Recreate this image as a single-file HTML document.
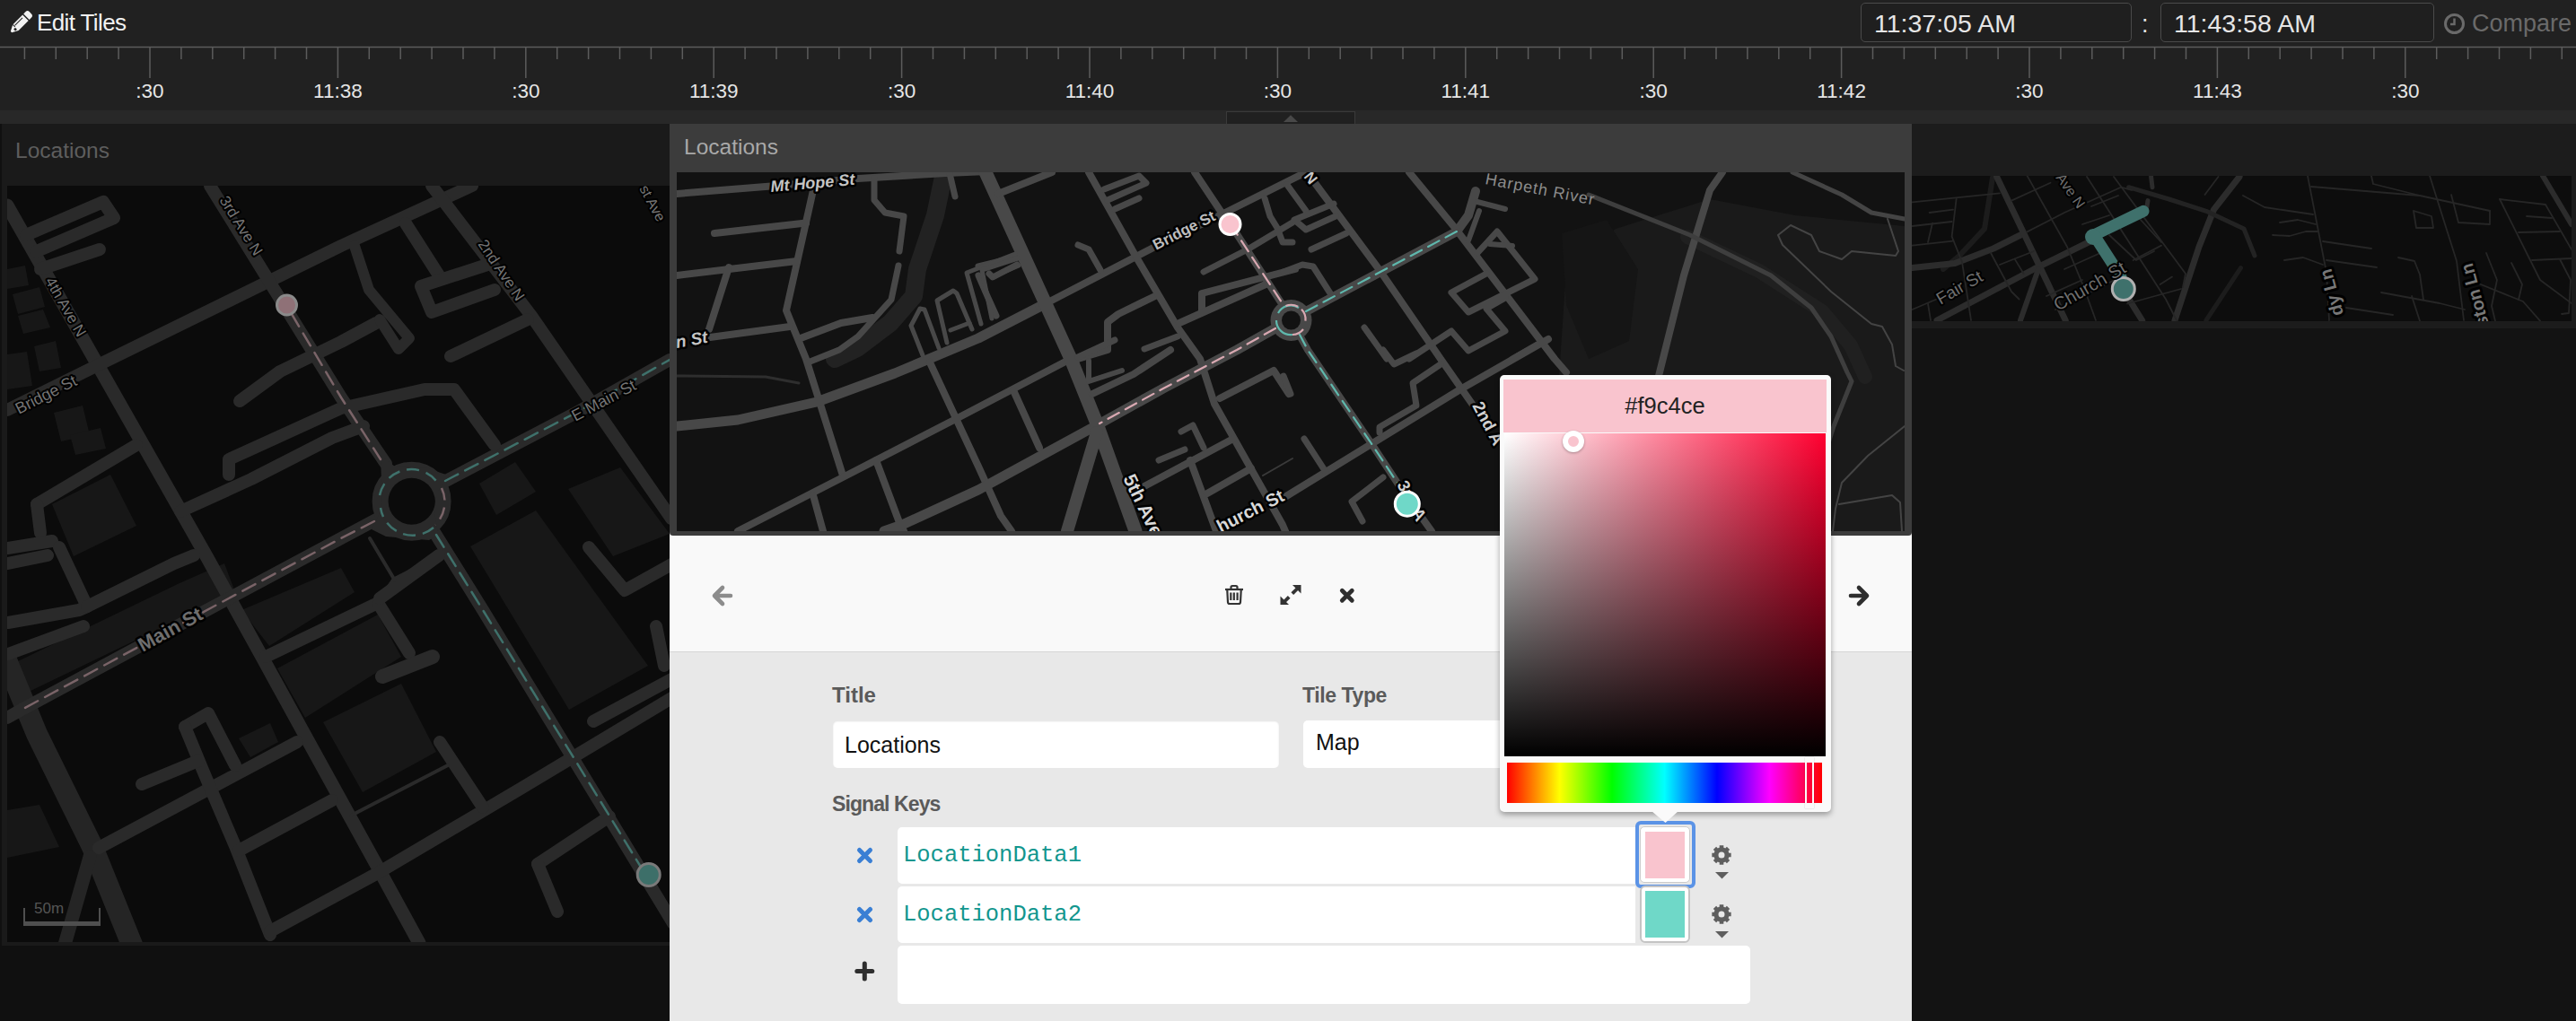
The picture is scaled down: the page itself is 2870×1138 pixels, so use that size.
<!DOCTYPE html>
<html><head><meta charset="utf-8">
<style>
*{margin:0;padding:0;box-sizing:border-box}
html,body{width:2870px;height:1138px;overflow:hidden;background:#101010;font-family:'Liberation Sans', sans-serif}
.abs{position:absolute}
</style></head><body>
<div class="abs" style="left:0;top:0;width:2870px;height:123px;background:#212121"></div>
<div class="abs" style="left:0;top:123px;width:2870px;height:15px;background:#282828"></div>
<div class="abs" style="left:1366px;top:124px;width:144px;height:16px;background:#202020;border:1.5px solid #3a3a3a;border-bottom:none"></div>
<svg class="abs" style="left:1429px;top:127px" width="18" height="10"><path d="M1 9 L9 1.3 L17 9 Z" fill="#484848"/></svg>
<svg style="position:absolute;left:0;top:0" width="2870" height="123"><line x1="0" y1="52.5" x2="2870" y2="52.5" stroke="#5c5c5c" stroke-width="1.5"/><line x1="27.4" y1="52" x2="27.4" y2="66" stroke="#5c5c5c" stroke-width="1.5"/><line x1="62.3" y1="52" x2="62.3" y2="66" stroke="#5c5c5c" stroke-width="1.5"/><line x1="97.2" y1="52" x2="97.2" y2="66" stroke="#5c5c5c" stroke-width="1.5"/><line x1="132.1" y1="52" x2="132.1" y2="66" stroke="#5c5c5c" stroke-width="1.5"/><line x1="167.0" y1="52" x2="167.0" y2="87" stroke="#5c5c5c" stroke-width="1.5"/><line x1="201.9" y1="52" x2="201.9" y2="66" stroke="#5c5c5c" stroke-width="1.5"/><line x1="236.8" y1="52" x2="236.8" y2="66" stroke="#5c5c5c" stroke-width="1.5"/><line x1="271.7" y1="52" x2="271.7" y2="66" stroke="#5c5c5c" stroke-width="1.5"/><line x1="306.6" y1="52" x2="306.6" y2="66" stroke="#5c5c5c" stroke-width="1.5"/><line x1="341.5" y1="52" x2="341.5" y2="66" stroke="#5c5c5c" stroke-width="1.5"/><line x1="376.4" y1="52" x2="376.4" y2="87" stroke="#5c5c5c" stroke-width="1.5"/><line x1="411.3" y1="52" x2="411.3" y2="66" stroke="#5c5c5c" stroke-width="1.5"/><line x1="446.2" y1="52" x2="446.2" y2="66" stroke="#5c5c5c" stroke-width="1.5"/><line x1="481.1" y1="52" x2="481.1" y2="66" stroke="#5c5c5c" stroke-width="1.5"/><line x1="516.0" y1="52" x2="516.0" y2="66" stroke="#5c5c5c" stroke-width="1.5"/><line x1="550.9" y1="52" x2="550.9" y2="66" stroke="#5c5c5c" stroke-width="1.5"/><line x1="585.8" y1="52" x2="585.8" y2="87" stroke="#5c5c5c" stroke-width="1.5"/><line x1="620.7" y1="52" x2="620.7" y2="66" stroke="#5c5c5c" stroke-width="1.5"/><line x1="655.6" y1="52" x2="655.6" y2="66" stroke="#5c5c5c" stroke-width="1.5"/><line x1="690.5" y1="52" x2="690.5" y2="66" stroke="#5c5c5c" stroke-width="1.5"/><line x1="725.4" y1="52" x2="725.4" y2="66" stroke="#5c5c5c" stroke-width="1.5"/><line x1="760.3" y1="52" x2="760.3" y2="66" stroke="#5c5c5c" stroke-width="1.5"/><line x1="795.2" y1="52" x2="795.2" y2="87" stroke="#5c5c5c" stroke-width="1.5"/><line x1="830.1" y1="52" x2="830.1" y2="66" stroke="#5c5c5c" stroke-width="1.5"/><line x1="865.0" y1="52" x2="865.0" y2="66" stroke="#5c5c5c" stroke-width="1.5"/><line x1="899.9" y1="52" x2="899.9" y2="66" stroke="#5c5c5c" stroke-width="1.5"/><line x1="934.8" y1="52" x2="934.8" y2="66" stroke="#5c5c5c" stroke-width="1.5"/><line x1="969.7" y1="52" x2="969.7" y2="66" stroke="#5c5c5c" stroke-width="1.5"/><line x1="1004.6" y1="52" x2="1004.6" y2="87" stroke="#5c5c5c" stroke-width="1.5"/><line x1="1039.5" y1="52" x2="1039.5" y2="66" stroke="#5c5c5c" stroke-width="1.5"/><line x1="1074.4" y1="52" x2="1074.4" y2="66" stroke="#5c5c5c" stroke-width="1.5"/><line x1="1109.3" y1="52" x2="1109.3" y2="66" stroke="#5c5c5c" stroke-width="1.5"/><line x1="1144.2" y1="52" x2="1144.2" y2="66" stroke="#5c5c5c" stroke-width="1.5"/><line x1="1179.1" y1="52" x2="1179.1" y2="66" stroke="#5c5c5c" stroke-width="1.5"/><line x1="1214.0" y1="52" x2="1214.0" y2="87" stroke="#5c5c5c" stroke-width="1.5"/><line x1="1248.9" y1="52" x2="1248.9" y2="66" stroke="#5c5c5c" stroke-width="1.5"/><line x1="1283.8" y1="52" x2="1283.8" y2="66" stroke="#5c5c5c" stroke-width="1.5"/><line x1="1318.7" y1="52" x2="1318.7" y2="66" stroke="#5c5c5c" stroke-width="1.5"/><line x1="1353.6" y1="52" x2="1353.6" y2="66" stroke="#5c5c5c" stroke-width="1.5"/><line x1="1388.5" y1="52" x2="1388.5" y2="66" stroke="#5c5c5c" stroke-width="1.5"/><line x1="1423.4" y1="52" x2="1423.4" y2="87" stroke="#5c5c5c" stroke-width="1.5"/><line x1="1458.3" y1="52" x2="1458.3" y2="66" stroke="#5c5c5c" stroke-width="1.5"/><line x1="1493.2" y1="52" x2="1493.2" y2="66" stroke="#5c5c5c" stroke-width="1.5"/><line x1="1528.1" y1="52" x2="1528.1" y2="66" stroke="#5c5c5c" stroke-width="1.5"/><line x1="1563.0" y1="52" x2="1563.0" y2="66" stroke="#5c5c5c" stroke-width="1.5"/><line x1="1597.9" y1="52" x2="1597.9" y2="66" stroke="#5c5c5c" stroke-width="1.5"/><line x1="1632.8" y1="52" x2="1632.8" y2="87" stroke="#5c5c5c" stroke-width="1.5"/><line x1="1667.7" y1="52" x2="1667.7" y2="66" stroke="#5c5c5c" stroke-width="1.5"/><line x1="1702.6" y1="52" x2="1702.6" y2="66" stroke="#5c5c5c" stroke-width="1.5"/><line x1="1737.5" y1="52" x2="1737.5" y2="66" stroke="#5c5c5c" stroke-width="1.5"/><line x1="1772.4" y1="52" x2="1772.4" y2="66" stroke="#5c5c5c" stroke-width="1.5"/><line x1="1807.3" y1="52" x2="1807.3" y2="66" stroke="#5c5c5c" stroke-width="1.5"/><line x1="1842.2" y1="52" x2="1842.2" y2="87" stroke="#5c5c5c" stroke-width="1.5"/><line x1="1877.1" y1="52" x2="1877.1" y2="66" stroke="#5c5c5c" stroke-width="1.5"/><line x1="1912.0" y1="52" x2="1912.0" y2="66" stroke="#5c5c5c" stroke-width="1.5"/><line x1="1946.9" y1="52" x2="1946.9" y2="66" stroke="#5c5c5c" stroke-width="1.5"/><line x1="1981.8" y1="52" x2="1981.8" y2="66" stroke="#5c5c5c" stroke-width="1.5"/><line x1="2016.7" y1="52" x2="2016.7" y2="66" stroke="#5c5c5c" stroke-width="1.5"/><line x1="2051.6" y1="52" x2="2051.6" y2="87" stroke="#5c5c5c" stroke-width="1.5"/><line x1="2086.5" y1="52" x2="2086.5" y2="66" stroke="#5c5c5c" stroke-width="1.5"/><line x1="2121.4" y1="52" x2="2121.4" y2="66" stroke="#5c5c5c" stroke-width="1.5"/><line x1="2156.3" y1="52" x2="2156.3" y2="66" stroke="#5c5c5c" stroke-width="1.5"/><line x1="2191.2" y1="52" x2="2191.2" y2="66" stroke="#5c5c5c" stroke-width="1.5"/><line x1="2226.1" y1="52" x2="2226.1" y2="66" stroke="#5c5c5c" stroke-width="1.5"/><line x1="2261.0" y1="52" x2="2261.0" y2="87" stroke="#5c5c5c" stroke-width="1.5"/><line x1="2295.9" y1="52" x2="2295.9" y2="66" stroke="#5c5c5c" stroke-width="1.5"/><line x1="2330.8" y1="52" x2="2330.8" y2="66" stroke="#5c5c5c" stroke-width="1.5"/><line x1="2365.7" y1="52" x2="2365.7" y2="66" stroke="#5c5c5c" stroke-width="1.5"/><line x1="2400.6" y1="52" x2="2400.6" y2="66" stroke="#5c5c5c" stroke-width="1.5"/><line x1="2435.5" y1="52" x2="2435.5" y2="66" stroke="#5c5c5c" stroke-width="1.5"/><line x1="2470.4" y1="52" x2="2470.4" y2="87" stroke="#5c5c5c" stroke-width="1.5"/><line x1="2505.3" y1="52" x2="2505.3" y2="66" stroke="#5c5c5c" stroke-width="1.5"/><line x1="2540.2" y1="52" x2="2540.2" y2="66" stroke="#5c5c5c" stroke-width="1.5"/><line x1="2575.1" y1="52" x2="2575.1" y2="66" stroke="#5c5c5c" stroke-width="1.5"/><line x1="2610.0" y1="52" x2="2610.0" y2="66" stroke="#5c5c5c" stroke-width="1.5"/><line x1="2644.9" y1="52" x2="2644.9" y2="66" stroke="#5c5c5c" stroke-width="1.5"/><line x1="2679.8" y1="52" x2="2679.8" y2="87" stroke="#5c5c5c" stroke-width="1.5"/><line x1="2714.7" y1="52" x2="2714.7" y2="66" stroke="#5c5c5c" stroke-width="1.5"/><line x1="2749.6" y1="52" x2="2749.6" y2="66" stroke="#5c5c5c" stroke-width="1.5"/><line x1="2784.5" y1="52" x2="2784.5" y2="66" stroke="#5c5c5c" stroke-width="1.5"/><line x1="2819.4" y1="52" x2="2819.4" y2="66" stroke="#5c5c5c" stroke-width="1.5"/><line x1="2854.3" y1="52" x2="2854.3" y2="66" stroke="#5c5c5c" stroke-width="1.5"/><text x="167.0" y="109" text-anchor="middle" fill="#e6e6e6" font-size="22.5" font-family="'Liberation Sans', sans-serif">:30</text><text x="376.4" y="109" text-anchor="middle" fill="#e6e6e6" font-size="22.5" font-family="'Liberation Sans', sans-serif">11:38</text><text x="585.8" y="109" text-anchor="middle" fill="#e6e6e6" font-size="22.5" font-family="'Liberation Sans', sans-serif">:30</text><text x="795.2" y="109" text-anchor="middle" fill="#e6e6e6" font-size="22.5" font-family="'Liberation Sans', sans-serif">11:39</text><text x="1004.6" y="109" text-anchor="middle" fill="#e6e6e6" font-size="22.5" font-family="'Liberation Sans', sans-serif">:30</text><text x="1214.0" y="109" text-anchor="middle" fill="#e6e6e6" font-size="22.5" font-family="'Liberation Sans', sans-serif">11:40</text><text x="1423.4" y="109" text-anchor="middle" fill="#e6e6e6" font-size="22.5" font-family="'Liberation Sans', sans-serif">:30</text><text x="1632.8" y="109" text-anchor="middle" fill="#e6e6e6" font-size="22.5" font-family="'Liberation Sans', sans-serif">11:41</text><text x="1842.2" y="109" text-anchor="middle" fill="#e6e6e6" font-size="22.5" font-family="'Liberation Sans', sans-serif">:30</text><text x="2051.6" y="109" text-anchor="middle" fill="#e6e6e6" font-size="22.5" font-family="'Liberation Sans', sans-serif">11:42</text><text x="2261.0" y="109" text-anchor="middle" fill="#e6e6e6" font-size="22.5" font-family="'Liberation Sans', sans-serif">:30</text><text x="2470.4" y="109" text-anchor="middle" fill="#e6e6e6" font-size="22.5" font-family="'Liberation Sans', sans-serif">11:43</text><text x="2679.8" y="109" text-anchor="middle" fill="#e6e6e6" font-size="22.5" font-family="'Liberation Sans', sans-serif">:30</text></svg>
<!-- header -->
<svg class="abs" style="left:0px;top:0px" width="50" height="50"><g transform="translate(12.5 35.6) rotate(-45)"><path d="M0 -1 L0 1 L7 4.6 L22.5 4.6 L22.5 -4.6 L7 -4.6 Z" fill="#f2f2f2"/><path d="M24 -4.6 L27 -4.6 Q30.2 -4.6 30.2 -1.6 L30.2 1.6 Q30.2 4.6 27 4.6 L24 4.6 Z" fill="#f2f2f2"/><path d="M8 -2.3 L20 -2.3" stroke="#212121" stroke-width="1"/><path d="M4 -0.2 L6.5 -0.2 L6.5 2.6 L4 2.6 Z" fill="#212121"/><path d="M7 -4.6 L7 -1" stroke="#212121" stroke-width="1"/></g></svg>
<div class="abs" style="left:41px;top:9px;font-size:26px;color:#f2f2f2;line-height:32px;letter-spacing:-0.6px">Edit Tiles</div>
<div class="abs" style="left:2073px;top:3px;width:302px;height:44px;border:1.5px solid #4a4a4a;border-radius:5px;background:#1f1f1f"></div>
<div class="abs" style="left:2088px;top:9px;font-size:28.5px;color:#e6e6e6;line-height:34px">11:37:05 AM</div>
<div class="abs" style="left:2386px;top:11px;font-size:27px;color:#e6e6e6;line-height:32px">:</div>
<div class="abs" style="left:2407px;top:3px;width:305px;height:44px;border:1.5px solid #4a4a4a;border-radius:5px;background:#1f1f1f"></div>
<div class="abs" style="left:2422px;top:9px;font-size:28.5px;color:#e6e6e6;line-height:34px">11:43:58 AM</div>
<svg class="abs" style="left:2722px;top:14px" width="25" height="25" viewBox="0 0 25 25"><circle cx="12.5" cy="12.5" r="10" fill="none" stroke="#6a6a6a" stroke-width="3"/><path d="M12.5 6.5 V13 H8" fill="none" stroke="#6a6a6a" stroke-width="2.5"/></svg>
<div class="abs" style="left:2754px;top:9px;font-size:27px;color:#6a6a6a;line-height:34px">Compare</div>

<!-- left tile -->
<div class="abs" style="left:2px;top:138px;width:744px;height:916px;background:#1a1a1a"></div>
<div class="abs" style="left:17px;top:153px;font-size:24.5px;color:#5e5e5e;line-height:30px">Locations</div>
<div class="abs" style="left:8px;top:207px;width:738px;height:843px;background:#0b0b0b"></div>
<svg class="abs" style="left:8px;top:207px" width="738" height="843" viewBox="8 207 738 843"><path d="M8.0 300.0 L28.0 296.0 L32.0 318.0 L8.0 322.0 Z" fill="#171717"/><path d="M14.0 328.0 L44.0 320.0 L50.0 342.0 L20.0 350.0 Z" fill="#171717"/><path d="M20.0 352.0 L48.0 345.0 L56.0 365.0 L26.0 372.0 Z" fill="#171717"/><path d="M38.0 386.0 L62.0 380.0 L68.0 410.0 L44.0 414.0 Z" fill="#171717"/><path d="M8.0 395.0 L30.0 392.0 L36.0 430.0 L8.0 434.0 Z" fill="#171717"/><path d="M60.0 460.0 L92.0 452.0 L100.0 485.0 L68.0 492.0 Z" fill="#171717"/><path d="M78.0 485.0 L112.0 477.0 L118.0 500.0 L84.0 507.0 Z" fill="#171717"/><path d="M58.0 562.0 L123.0 529.0 L152.0 586.0 L82.0 620.0 Z" fill="#171717"/><path d="M18.0 738.0 L200.0 650.0 L250.0 628.0 L262.0 660.0 L30.0 772.0 Z" fill="#171717"/><path d="M269.0 680.0 L380.0 633.0 L395.0 660.0 L300.0 720.0 Z" fill="#171717"/><path d="M8.0 903.0 L44.0 897.0 L66.0 944.0 L8.0 956.0 Z" fill="#171717"/><path d="M309.0 745.0 L421.0 685.0 L447.0 732.0 L340.0 800.0 Z" fill="#171717"/><path d="M360.0 805.0 L447.0 762.0 L486.0 838.0 L404.0 883.0 Z" fill="#171717"/><path d="M266.0 823.0 L301.0 806.0 L310.0 827.0 L279.0 844.0 Z" fill="#171717"/><path d="M534.0 539.0 L574.0 515.0 L597.0 548.0 L553.0 574.0 Z" fill="#171717"/><path d="M524.0 609.0 L597.0 569.0 L722.0 742.0 L634.0 791.0 Z" fill="#171717"/><path d="M633.0 545.0 L691.0 521.0 L746.0 595.0 L683.0 620.0 Z" fill="#171717"/><path d="M8.0 738.0 L41.0 818.0 L103.0 944.0 L147.0 1053.0" fill="none" stroke="#252525" stroke-width="24" stroke-linejoin="round" stroke-linecap="round"/><path d="M100.0 955.0 L72.0 1053.0" fill="none" stroke="#252525" stroke-width="15" stroke-linejoin="round" stroke-linecap="round"/><path d="M8.0 229.0 L230.0 620.0 L256.0 667.0 L294.0 736.0 L339.0 818.0 L420.0 965.0 L467.0 1051.0" fill="none" stroke="#2a2a2a" stroke-width="15" stroke-linejoin="round" stroke-linecap="round"/><path d="M8.0 457.0 L111.0 406.0 L380.0 274.0 L526.0 207.0" fill="none" stroke="#2a2a2a" stroke-width="14" stroke-linejoin="round" stroke-linecap="round"/><path d="M234.0 207.0 L380.0 443.0 L430.0 517.0" fill="none" stroke="#2a2a2a" stroke-width="14" stroke-linejoin="round" stroke-linecap="round"/><path d="M491.0 539.0 L640.0 461.0 L746.0 401.0" fill="none" stroke="#2a2a2a" stroke-width="14" stroke-linejoin="round" stroke-linecap="round"/><path d="M423.0 577.0 L380.0 600.0 L238.0 676.0 L24.0 791.0 L8.0 800.0" fill="none" stroke="#2a2a2a" stroke-width="14" stroke-linejoin="round" stroke-linecap="round"/><path d="M482.0 590.0 L538.0 680.0 L750.0 1029.0" fill="none" stroke="#2a2a2a" stroke-width="14" stroke-linejoin="round" stroke-linecap="round"/><path d="M481.0 207.0 L592.0 352.0 L748.0 578.0" fill="none" stroke="#2a2a2a" stroke-width="14" stroke-linejoin="round" stroke-linecap="round"/><path d="M29.0 262.0 L115.0 225.0 L127.0 243.0 L41.0 280.0" fill="none" stroke="#2a2a2a" stroke-width="14" stroke-linejoin="round" stroke-linecap="round"/><path d="M45.0 300.0 L111.0 278.0" fill="none" stroke="#2a2a2a" stroke-width="14" stroke-linejoin="round" stroke-linecap="round"/><path d="M267.0 447.0 L312.0 414.0 L380.0 381.0 L419.0 360.0" fill="none" stroke="#2a2a2a" stroke-width="14" stroke-linejoin="round" stroke-linecap="round"/><path d="M255.0 529.0 L255.0 512.0 L380.0 455.0 L473.0 434.0 L506.0 434.0 L551.0 496.0" fill="none" stroke="#2a2a2a" stroke-width="14" stroke-linejoin="round" stroke-linecap="round"/><path d="M201.0 570.0 L280.0 534.0 L370.0 488.0 L405.0 475.0" fill="none" stroke="#2a2a2a" stroke-width="14" stroke-linejoin="round" stroke-linecap="round"/><path d="M41.0 562.0 L152.0 496.0" fill="none" stroke="#2a2a2a" stroke-width="14" stroke-linejoin="round" stroke-linecap="round"/><path d="M41.0 562.0 L45.0 594.0" fill="none" stroke="#2a2a2a" stroke-width="14" stroke-linejoin="round" stroke-linecap="round"/><path d="M8.0 611.0 L58.0 603.0" fill="none" stroke="#2a2a2a" stroke-width="14" stroke-linejoin="round" stroke-linecap="round"/><path d="M452.0 249.0 L489.0 307.0" fill="none" stroke="#2a2a2a" stroke-width="14" stroke-linejoin="round" stroke-linecap="round"/><path d="M543.0 295.0 L469.0 319.0 L481.0 348.0 L551.0 323.0" fill="none" stroke="#2a2a2a" stroke-width="14" stroke-linejoin="round" stroke-linecap="round"/><path d="M395.0 274.0 L411.0 323.0 L456.0 377.0 L444.0 389.0 L423.0 356.0" fill="none" stroke="#2a2a2a" stroke-width="12" stroke-linejoin="round" stroke-linecap="round"/><path d="M502.0 397.0 L588.0 356.0" fill="none" stroke="#2a2a2a" stroke-width="14" stroke-linejoin="round" stroke-linecap="round"/><path d="M9.0 628.0 L53.0 619.0" fill="none" stroke="#2a2a2a" stroke-width="14" stroke-linejoin="round" stroke-linecap="round"/><path d="M9.0 694.0 L88.0 680.0 L97.0 676.0 L66.0 610.0" fill="none" stroke="#2a2a2a" stroke-width="14" stroke-linejoin="round" stroke-linecap="round"/><path d="M9.0 729.0 L93.0 698.0" fill="none" stroke="#2a2a2a" stroke-width="14" stroke-linejoin="round" stroke-linecap="round"/><path d="M97.0 676.0 L194.0 628.0 L216.0 619.0" fill="none" stroke="#2a2a2a" stroke-width="14" stroke-linejoin="round" stroke-linecap="round"/><path d="M110.0 945.0 L331.0 827.0" fill="none" stroke="#2a2a2a" stroke-width="14" stroke-linejoin="round" stroke-linecap="round"/><path d="M296.0 732.0 L421.0 672.0" fill="none" stroke="#2a2a2a" stroke-width="14" stroke-linejoin="round" stroke-linecap="round"/><path d="M421.0 672.0 L439.0 646.0 L490.0 620.0" fill="none" stroke="#2a2a2a" stroke-width="5" stroke-linejoin="round" stroke-linecap="round"/><path d="M421.0 672.0 L456.0 728.0" fill="none" stroke="#2a2a2a" stroke-width="14" stroke-linejoin="round" stroke-linecap="round"/><path d="M426.0 754.0 L482.0 732.0" fill="none" stroke="#2a2a2a" stroke-width="16" stroke-linejoin="round" stroke-linecap="round"/><path d="M206.0 810.0 L232.0 795.0 L262.0 853.0" fill="none" stroke="#2a2a2a" stroke-width="14" stroke-linejoin="round" stroke-linecap="round"/><path d="M206.0 810.0 L227.0 861.0 L262.0 943.0 L301.0 1042.0" fill="none" stroke="#2a2a2a" stroke-width="14" stroke-linejoin="round" stroke-linecap="round"/><path d="M158.0 874.0 L221.0 848.0" fill="none" stroke="#2a2a2a" stroke-width="14" stroke-linejoin="round" stroke-linecap="round"/><path d="M266.0 948.0 L370.0 892.0" fill="none" stroke="#2a2a2a" stroke-width="14" stroke-linejoin="round" stroke-linecap="round"/><path d="M301.0 1038.0 L421.0 973.0 L580.0 879.0 L750.0 777.0" fill="none" stroke="#2a2a2a" stroke-width="14" stroke-linejoin="round" stroke-linecap="round"/><path d="M490.0 827.0 L538.0 900.0" fill="none" stroke="#2a2a2a" stroke-width="14" stroke-linejoin="round" stroke-linecap="round"/><path d="M599.0 963.0 L679.0 910.0" fill="none" stroke="#2a2a2a" stroke-width="14" stroke-linejoin="round" stroke-linecap="round"/><path d="M599.0 963.0 L621.0 1016.0" fill="none" stroke="#2a2a2a" stroke-width="14" stroke-linejoin="round" stroke-linecap="round"/><path d="M656.0 610.0 L696.0 658.0 L750.0 628.0" fill="none" stroke="#2a2a2a" stroke-width="14" stroke-linejoin="round" stroke-linecap="round"/><path d="M731.0 698.0 L740.0 742.0" fill="none" stroke="#2a2a2a" stroke-width="14" stroke-linejoin="round" stroke-linecap="round"/><path d="M661.0 804.0 L750.0 756.0" fill="none" stroke="#2a2a2a" stroke-width="14" stroke-linejoin="round" stroke-linecap="round"/><path d="M489.0 619.0 L423.0 667.0" fill="none" stroke="#2a2a2a" stroke-width="14" stroke-linejoin="round" stroke-linecap="round"/><path d="M391.0 909.0 L499.0 853.0" fill="none" stroke="#2a2a2a" stroke-width="4" stroke-linejoin="round" stroke-linecap="round"/><path d="M412.0 600.0 L440.0 647.0" fill="none" stroke="#2a2a2a" stroke-width="4" stroke-linejoin="round" stroke-linecap="round"/><circle cx="458.6" cy="558.7" r="35" fill="none" stroke="#2a2a2a" stroke-width="18"/><path d="M424.0 508.0 L440.0 520.0 L476.0 522.0 L500.0 530.0 L482.0 556.0 L488.0 596.0 L478.0 602.0 L430.0 598.0 L414.0 590.0 L426.0 566.0 Z" fill="#2a2a2a"/><circle cx="458.6" cy="558.7" r="26" fill="#0b0b0b"/><path d="M325.0 350.0 L380.0 443.0 L424.0 512.0" fill="none" stroke="#7a6468" stroke-width="2.5" stroke-linejoin="round" stroke-linecap="round" stroke-dasharray="16 9"/><path d="M417.0 581.0 L380.0 600.0 L238.0 676.0 L24.0 791.0" fill="none" stroke="#7a6468" stroke-width="2.5" stroke-linejoin="round" stroke-linecap="round" stroke-dasharray="16 9"/><path d="M496.0 536.0 L640.0 461.0 L746.0 401.0" fill="none" stroke="#3f716b" stroke-width="2.5" stroke-linejoin="round" stroke-linecap="round" stroke-dasharray="16 9"/><path d="M486.0 596.0 L538.0 680.0 L715.0 968.0" fill="none" stroke="#3f716b" stroke-width="2.5" stroke-linejoin="round" stroke-linecap="round" stroke-dasharray="16 9"/><path d="M423 552 A36 36 0 0 1 490 542" fill="none" stroke="#3f716b" stroke-width="2.5" stroke-dasharray="14 8"/><path d="M492 544 A36 36 0 0 1 485 585" fill="none" stroke="#7a6468" stroke-width="2.5" stroke-dasharray="14 8"/><path d="M483 588 A36 36 0 0 1 424 566" fill="none" stroke="#3f716b" stroke-width="2.5" stroke-dasharray="14 8"/><circle cx="319.5" cy="340" r="11" fill="#8f7177" stroke="#8a8a8a" stroke-width="3"/><circle cx="722.7" cy="975" r="12.5" fill="#3d6f69" stroke="#7a7a7a" stroke-width="3"/><text x="244" y="223" transform="rotate(58 244 223)" font-family="'Liberation Sans', sans-serif" font-size="17" fill="#747474" stroke="#000" stroke-width="4" stroke-linejoin="round" paint-order="stroke">3rd Ave N</text><text x="50" y="313" transform="rotate(60 50 313)" font-family="'Liberation Sans', sans-serif" font-size="17" fill="#747474" stroke="#000" stroke-width="4" stroke-linejoin="round" paint-order="stroke">4th Ave N</text><text x="21" y="462" transform="rotate(-27 21 462)" font-family="'Liberation Sans', sans-serif" font-size="18" fill="#747474" stroke="#000" stroke-width="4" stroke-linejoin="round" paint-order="stroke">Bridge St</text><text x="532" y="272" transform="rotate(56 532 272)" font-family="'Liberation Sans', sans-serif" font-size="17" fill="#747474" stroke="#000" stroke-width="4" stroke-linejoin="round" paint-order="stroke">2nd Ave N</text><text x="641" y="470" transform="rotate(-28 641 470)" font-family="'Liberation Sans', sans-serif" font-size="18" fill="#747474" stroke="#000" stroke-width="4" stroke-linejoin="round" paint-order="stroke">E Main St</text><text x="159" y="727" transform="rotate(-29 159 727)" font-family="'Liberation Sans', sans-serif" font-size="22" font-weight="bold" fill="#6e6e6e" stroke="#000" stroke-width="5" stroke-linejoin="round" paint-order="stroke">Main St</text><text x="712" y="210" transform="rotate(62 712 210)" font-family="'Liberation Sans', sans-serif" font-size="16" fill="#747474" stroke="#000" stroke-width="4" stroke-linejoin="round" paint-order="stroke">st Ave</text><path d="M27 1012 L27 1030 L111 1030 L111 1012" fill="none" stroke="#4f4f4f" stroke-width="2"/><path d="M26 1029.5 L112 1029.5" stroke="#4f4f4f" stroke-width="5"/><text x="38" y="1018" font-family="'Liberation Sans', sans-serif" font-size="17" fill="#555">50m</text></svg>

<!-- right tile -->
<div class="abs" style="left:2130px;top:138px;width:740px;height:1000px;background:#131313"></div>
<div class="abs" style="left:2130px;top:138px;width:740px;height:228px;background:#1c1c1c"></div>
<div class="abs" style="left:2130px;top:196px;width:735px;height:162px;background:#0d0d0d"></div>
<svg class="abs" style="left:2130px;top:196px" width="735" height="162" viewBox="2130 196 735 162"><path d="M2220.0 198.0 L2211.0 255.0 L2183.0 285.0 L2165.0 300.0" fill="none" stroke="#1c1c1c" stroke-width="6" stroke-linejoin="round" stroke-linecap="round"/><path d="M2130.5 298.6 L2178.0 293.6 L2221.0 277.0 L2251.0 262.0" fill="none" stroke="#2c2c2c" stroke-width="7" stroke-linejoin="round" stroke-linecap="round"/><path d="M2158.0 357.0 L2266.0 300.0 L2333.0 267.0" fill="none" stroke="#2c2c2c" stroke-width="7" stroke-linejoin="round" stroke-linecap="round"/><path d="M2224.6 197.0 L2301.2 357.0" fill="none" stroke="#2c2c2c" stroke-width="7" stroke-linejoin="round" stroke-linecap="round"/><path d="M2271.0 300.0 L2251.0 357.0" fill="none" stroke="#2c2c2c" stroke-width="6" stroke-linejoin="round" stroke-linecap="round"/><path d="M2495.0 197.0 L2466.5 233.6 L2450.0 275.0 L2423.0 357.0" fill="none" stroke="#2c2c2c" stroke-width="7" stroke-linejoin="round" stroke-linecap="round"/><path d="M2371.6 208.7 L2416.6 222.0 L2458.0 235.3 L2500.0 255.0 L2512.0 285.0" fill="none" stroke="#232323" stroke-width="5" stroke-linejoin="round" stroke-linecap="round"/><path d="M2496.5 298.6 L2458.0 357.0" fill="none" stroke="#1c1c1c" stroke-width="5" stroke-linejoin="round" stroke-linecap="round"/><path d="M2396.6 197.0 L2398.0 208.7" fill="none" stroke="#2c2c2c" stroke-width="5" stroke-linejoin="round" stroke-linecap="round"/><path d="M2393.0 223.6 L2391.6 232.0" fill="none" stroke="#2c2c2c" stroke-width="5" stroke-linejoin="round" stroke-linecap="round"/><path d="M2366.6 325.0 L2386.6 357.0" fill="none" stroke="#2c2c2c" stroke-width="7" stroke-linejoin="round" stroke-linecap="round"/><path d="M2833.0 196.0 L2865.0 250.0" fill="none" stroke="#2c2c2c" stroke-width="6" stroke-linejoin="round" stroke-linecap="round"/><path d="M2130.5 225.3 L2228.0 215.3" fill="none" stroke="#262626" stroke-width="1.8" stroke-linejoin="round" stroke-linecap="round"/><path d="M2149.6 237.0 L2176.0 233.6" fill="none" stroke="#262626" stroke-width="1.8" stroke-linejoin="round" stroke-linecap="round"/><path d="M2130.5 252.0 L2174.6 247.0" fill="none" stroke="#262626" stroke-width="1.8" stroke-linejoin="round" stroke-linecap="round"/><path d="M2130.5 273.6 L2176.0 268.6" fill="none" stroke="#262626" stroke-width="1.8" stroke-linejoin="round" stroke-linecap="round"/><path d="M2179.6 222.0 L2174.6 263.6 L2186.0 292.0 L2196.0 357.0" fill="none" stroke="#262626" stroke-width="1.8" stroke-linejoin="round" stroke-linecap="round"/><path d="M2153.0 248.6 L2148.0 270.0" fill="none" stroke="#262626" stroke-width="1.8" stroke-linejoin="round" stroke-linecap="round"/><path d="M2241.0 223.6 L2284.5 203.7" fill="none" stroke="#262626" stroke-width="1.8" stroke-linejoin="round" stroke-linecap="round"/><path d="M2258.0 195.0 L2303.0 275.0 L2321.0 318.6 L2335.0 357.0" fill="none" stroke="#262626" stroke-width="1.8" stroke-linejoin="round" stroke-linecap="round"/><path d="M2258.0 258.6 L2300.0 237.0 L2363.0 208.7 L2375.0 212.0" fill="none" stroke="#262626" stroke-width="1.8" stroke-linejoin="round" stroke-linecap="round"/><path d="M2218.0 282.0 L2241.0 325.0 L2249.6 333.5" fill="none" stroke="#262626" stroke-width="1.8" stroke-linejoin="round" stroke-linecap="round"/><path d="M2228.0 295.0 L2266.0 280.0" fill="none" stroke="#262626" stroke-width="1.8" stroke-linejoin="round" stroke-linecap="round"/><path d="M2244.6 288.6 L2254.6 305.0" fill="none" stroke="#262626" stroke-width="1.8" stroke-linejoin="round" stroke-linecap="round"/><path d="M2130.5 345.0 L2161.0 332.0" fill="none" stroke="#262626" stroke-width="1.8" stroke-linejoin="round" stroke-linecap="round"/><path d="M2148.0 338.5 L2151.0 357.0" fill="none" stroke="#262626" stroke-width="1.8" stroke-linejoin="round" stroke-linecap="round"/><path d="M2325.0 197.0 L2413.0 333.5 L2425.0 357.0" fill="none" stroke="#262626" stroke-width="1.8" stroke-linejoin="round" stroke-linecap="round"/><path d="M2355.0 197.0 L2435.0 305.0 L2432.0 320.0" fill="none" stroke="#262626" stroke-width="1.8" stroke-linejoin="round" stroke-linecap="round"/><path d="M2376.6 290.0 L2408.0 273.6" fill="none" stroke="#262626" stroke-width="1.8" stroke-linejoin="round" stroke-linecap="round"/><path d="M2370.0 338.5 L2430.0 322.0" fill="none" stroke="#262626" stroke-width="1.8" stroke-linejoin="round" stroke-linecap="round"/><path d="M2406.6 317.0 L2420.0 308.6" fill="none" stroke="#262626" stroke-width="1.8" stroke-linejoin="round" stroke-linecap="round"/><path d="M2456.5 217.0 L2471.5 197.0" fill="none" stroke="#262626" stroke-width="1.8" stroke-linejoin="round" stroke-linecap="round"/><path d="M2300.0 300.0 L2340.0 282.0" fill="none" stroke="#262626" stroke-width="1.8" stroke-linejoin="round" stroke-linecap="round"/><path d="M2280.0 330.0 L2320.0 312.0" fill="none" stroke="#262626" stroke-width="1.8" stroke-linejoin="round" stroke-linecap="round"/><path d="M2290.0 345.0 L2360.0 310.0" fill="none" stroke="#262626" stroke-width="1.8" stroke-linejoin="round" stroke-linecap="round"/><path d="M2330.0 230.0 L2360.0 218.0" fill="none" stroke="#262626" stroke-width="1.8" stroke-linejoin="round" stroke-linecap="round"/><path d="M2320.0 250.0 L2350.0 240.0" fill="none" stroke="#262626" stroke-width="1.8" stroke-linejoin="round" stroke-linecap="round"/><path d="M2350.0 262.0 L2380.0 290.0 L2400.0 280.0" fill="none" stroke="#262626" stroke-width="1.8" stroke-linejoin="round" stroke-linecap="round"/><path d="M2385.0 245.0 L2408.0 270.0" fill="none" stroke="#262626" stroke-width="1.8" stroke-linejoin="round" stroke-linecap="round"/><path d="M2571.0 196.0 L2592.0 304.0 L2595.0 357.0" fill="none" stroke="#262626" stroke-width="1.8" stroke-linejoin="round" stroke-linecap="round"/><path d="M2707.0 196.0 L2737.0 291.0 L2745.0 357.0" fill="none" stroke="#262626" stroke-width="1.8" stroke-linejoin="round" stroke-linecap="round"/><path d="M2785.0 222.0 L2830.0 312.0 L2865.0 338.0" fill="none" stroke="#262626" stroke-width="1.8" stroke-linejoin="round" stroke-linecap="round"/><path d="M2575.0 208.0 L2696.0 218.0 L2774.0 235.0" fill="none" stroke="#262626" stroke-width="1.8" stroke-linejoin="round" stroke-linecap="round"/><path d="M2642.0 196.0 L2644.0 205.0 L2696.0 218.0" fill="none" stroke="#262626" stroke-width="1.8" stroke-linejoin="round" stroke-linecap="round"/><path d="M2499.0 218.0 L2523.0 231.0 L2577.0 239.0" fill="none" stroke="#262626" stroke-width="1.8" stroke-linejoin="round" stroke-linecap="round"/><path d="M2532.0 262.0 L2551.0 263.0 L2569.0 258.0 L2582.0 258.0" fill="none" stroke="#262626" stroke-width="1.8" stroke-linejoin="round" stroke-linecap="round"/><path d="M2588.0 269.0 L2642.0 277.0" fill="none" stroke="#262626" stroke-width="1.8" stroke-linejoin="round" stroke-linecap="round"/><path d="M2545.0 290.0 L2566.0 287.0 L2588.0 295.0" fill="none" stroke="#262626" stroke-width="1.8" stroke-linejoin="round" stroke-linecap="round"/><path d="M2592.0 290.0 L2648.0 298.0" fill="none" stroke="#262626" stroke-width="1.8" stroke-linejoin="round" stroke-linecap="round"/><path d="M2672.0 287.0 L2690.0 291.0 L2696.0 306.0 L2700.0 334.0" fill="none" stroke="#262626" stroke-width="1.8" stroke-linejoin="round" stroke-linecap="round"/><path d="M2653.0 326.0 L2718.0 338.0 L2746.0 345.0" fill="none" stroke="#262626" stroke-width="1.8" stroke-linejoin="round" stroke-linecap="round"/><path d="M2614.0 343.0 L2666.0 351.0" fill="none" stroke="#262626" stroke-width="1.8" stroke-linejoin="round" stroke-linecap="round"/><path d="M2687.0 330.0 L2696.0 357.7" fill="none" stroke="#262626" stroke-width="1.8" stroke-linejoin="round" stroke-linecap="round"/><path d="M2759.0 315.0 L2811.0 336.0 L2830.0 357.7" fill="none" stroke="#262626" stroke-width="1.8" stroke-linejoin="round" stroke-linecap="round"/><path d="M2770.0 282.0 L2782.0 312.0 L2776.0 341.0 L2780.0 357.7" fill="none" stroke="#262626" stroke-width="1.8" stroke-linejoin="round" stroke-linecap="round"/><path d="M2798.0 293.0 L2810.0 317.0 L2806.0 334.0" fill="none" stroke="#262626" stroke-width="1.8" stroke-linejoin="round" stroke-linecap="round"/><path d="M2806.0 259.0 L2852.0 258.0" fill="none" stroke="#262626" stroke-width="1.8" stroke-linejoin="round" stroke-linecap="round"/><path d="M2815.0 241.0 L2843.0 243.0" fill="none" stroke="#262626" stroke-width="1.8" stroke-linejoin="round" stroke-linecap="round"/><path d="M2821.0 290.0 L2865.0 288.0" fill="none" stroke="#262626" stroke-width="1.8" stroke-linejoin="round" stroke-linecap="round"/><path d="M2852.0 289.0 L2864.0 312.0 L2862.0 349.0 L2854.0 350.0" fill="none" stroke="#262626" stroke-width="1.8" stroke-linejoin="round" stroke-linecap="round"/><path d="M2785.0 222.0 L2836.0 228.0 L2865.0 278.0" fill="none" stroke="#262626" stroke-width="1.8" stroke-linejoin="round" stroke-linecap="round"/><path d="M2689.0 235.0 L2709.0 241.0 L2711.0 254.0 L2692.0 254.0 L2689.0 235.0" fill="none" stroke="#262626" stroke-width="1.8" stroke-linejoin="round" stroke-linecap="round"/><path d="M2731.0 217.0 L2739.0 248.0 L2774.0 250.0 L2774.0 235.0" fill="none" stroke="#262626" stroke-width="1.8" stroke-linejoin="round" stroke-linecap="round"/><path d="M2540.0 248.0 L2560.0 245.0 L2580.0 250.0" fill="none" stroke="#262626" stroke-width="1.8" stroke-linejoin="round" stroke-linecap="round"/><path d="M2388.0 235.3 L2333.0 262.0 L2363.0 308.6" fill="none" stroke="#3f716c" stroke-width="13" stroke-linejoin="round" stroke-linecap="round"/><circle cx="2332" cy="264" r="9" fill="#3f716c"/><circle cx="2365.8" cy="322" r="12.5" fill="#3f716c" stroke="#b0b0b0" stroke-width="3"/><text x="2162" y="340" transform="rotate(-30 2162 340)" font-family="'Liberation Sans', sans-serif" font-size="19" fill="#6e6e6e" stroke="#000" stroke-width="4" stroke-linejoin="round" paint-order="stroke">Fair St</text><text x="2293" y="347" transform="rotate(-30 2293 347)" font-family="'Liberation Sans', sans-serif" font-size="20" fill="#6e6e6e" stroke="#000" stroke-width="4" stroke-linejoin="round" paint-order="stroke">Church St</text><text x="2290" y="198" transform="rotate(55 2290 198)" font-family="'Liberation Sans', sans-serif" font-size="16" fill="#6e6e6e" stroke="#000" stroke-width="4" stroke-linejoin="round" paint-order="stroke">Ave N</text><text x="2611" y="350" transform="rotate(-105 2611 350)" font-family="'Liberation Sans', sans-serif" font-size="20" font-weight="bold" fill="#777" stroke="#000" stroke-width="6" stroke-linejoin="round" paint-order="stroke">dy Ln</text><text x="2773" y="362" transform="rotate(-105 2773 362)" font-family="'Liberation Sans', sans-serif" font-size="20" font-weight="bold" fill="#777" stroke="#000" stroke-width="6" stroke-linejoin="round" paint-order="stroke">ston Ln</text></svg>

<!-- modal -->
<div class="abs" style="left:746px;top:138px;width:1384px;height:1000px;background:#e8e8e8"></div>
<div class="abs" style="left:746px;top:138px;width:1384px;height:459px;background:#3c3c3c;border-radius:0 0 4px 4px"></div>
<div class="abs" style="left:762px;top:149px;font-size:24.5px;color:#a9a9a9;line-height:30px">Locations</div>
<div class="abs" style="left:754px;top:192px;width:1368px;height:400px;background:#121212"></div>
<svg class="abs" style="left:754px;top:192px" width="1368" height="400" viewBox="754 192 1368 400"><path d="M1745.0 300.0 L1800.0 255.0 L1905.0 222.0 L2000.0 240.0 L2122.0 252.0 L2122.0 592.0 L1745.0 592.0 L1735.0 450.0 Z" fill="#1a1a1a"/><path d="M1740.0 260.0 L1790.0 245.0 L1825.0 300.0 L1815.0 380.0 L1770.0 400.0 L1745.0 340.0 Z" fill="#151515"/><path d="M1905.0 192.0 L2000.0 192.0 L2052.0 217.0 L2085.0 237.0 L2122.0 244.0 L2122.0 192.0 Z" fill="#121212"/><path d="M1880.0 264.0 L1960.0 302.0 L2030.0 347.0 L2062.0 385.0 L2078.0 420.0" fill="none" stroke="#202020" stroke-width="16" stroke-linejoin="round" stroke-linecap="round"/><path d="M1052.0 192.0 L1042.0 240.0 L1022.0 300.0 L1018.0 330.0 L992.0 360.0 L955.0 388.0 L930.0 400.0" fill="none" stroke="#222222" stroke-width="20" stroke-linejoin="round" stroke-linecap="round"/><path d="M754.0 216.0 L859.0 207.5 L956.0 199.0 L1054.0 193.0 L1100.0 191.0" fill="none" stroke="#484848" stroke-width="8" stroke-linejoin="round" stroke-linecap="round"/><path d="M906.0 212.0 L876.0 346.0 L880.0 356.0 L898.0 400.0 L939.0 530.0" fill="none" stroke="#484848" stroke-width="8" stroke-linejoin="round" stroke-linecap="round"/><path d="M796.0 260.0 L898.0 248.6" fill="none" stroke="#484848" stroke-width="8" stroke-linejoin="round" stroke-linecap="round"/><path d="M754.0 307.0 L888.0 291.0" fill="none" stroke="#484848" stroke-width="8" stroke-linejoin="round" stroke-linecap="round"/><path d="M812.0 298.0 L790.0 367.0" fill="none" stroke="#484848" stroke-width="8" stroke-linejoin="round" stroke-linecap="round"/><path d="M791.0 376.0 L880.0 364.0" fill="none" stroke="#484848" stroke-width="8" stroke-linejoin="round" stroke-linecap="round"/><path d="M892.0 377.0 L937.0 360.0 L972.0 354.0" fill="none" stroke="#484848" stroke-width="8" stroke-linejoin="round" stroke-linecap="round"/><path d="M974.0 199.0 L974.0 223.0 L986.0 237.0 L1007.0 241.0 L1002.0 280.0" fill="none" stroke="#484848" stroke-width="7" stroke-linejoin="round" stroke-linecap="round"/><path d="M1001.0 296.0 L993.0 334.0 L956.0 375.0 L935.0 390.0 L900.0 404.0" fill="none" stroke="#484848" stroke-width="7" stroke-linejoin="round" stroke-linecap="round"/><path d="M1058.0 193.0 L1064.0 219.0" fill="none" stroke="#484848" stroke-width="7" stroke-linejoin="round" stroke-linecap="round"/><path d="M754.0 475.0 L822.0 468.0 L910.0 448.0 L997.0 416.0 L1090.0 377.0 L1158.0 342.0" fill="none" stroke="#484848" stroke-width="11" stroke-linejoin="round" stroke-linecap="round"/><path d="M1158.0 342.0 L1285.0 276.0 L1365.0 237.0 L1453.0 193.0" fill="none" stroke="#484848" stroke-width="8" stroke-linejoin="round" stroke-linecap="round"/><path d="M822.0 592.0 L939.0 532.0 L1063.0 468.0 L1189.0 402.0" fill="none" stroke="#484848" stroke-width="8" stroke-linejoin="round" stroke-linecap="round"/><path d="M1201.0 400.0 L1234.0 390.0 L1234.0 375.0 L1234.0 359.0 L1246.0 350.0 L1287.0 330.0" fill="none" stroke="#484848" stroke-width="8" stroke-linejoin="round" stroke-linecap="round"/><path d="M906.0 552.0 L917.0 592.0" fill="none" stroke="#484848" stroke-width="8" stroke-linejoin="round" stroke-linecap="round"/><path d="M976.0 513.0 L1003.0 585.0 L1007.0 592.0" fill="none" stroke="#484848" stroke-width="8" stroke-linejoin="round" stroke-linecap="round"/><path d="M1036.0 404.0 L1091.0 522.0 L1115.0 575.0 L1127.0 592.0" fill="none" stroke="#484848" stroke-width="8" stroke-linejoin="round" stroke-linecap="round"/><path d="M1440.0 356.0 L1419.0 367.0 L1378.0 390.0 L1296.0 433.0 L1222.0 474.0 L1090.0 546.0 L1005.0 585.0 L985.0 592.0" fill="none" stroke="#484848" stroke-width="11" stroke-linejoin="round" stroke-linecap="round"/><path d="M1098.0 192.0 L1193.0 400.0 L1222.0 472.0 L1265.0 592.0" fill="none" stroke="#484848" stroke-width="15" stroke-linejoin="round" stroke-linecap="round"/><path d="M1222.0 482.0 L1189.0 592.0" fill="none" stroke="#484848" stroke-width="14" stroke-linejoin="round" stroke-linecap="round"/><path d="M1112.0 216.0 L1172.0 192.0" fill="none" stroke="#484848" stroke-width="8" stroke-linejoin="round" stroke-linecap="round"/><path d="M1213.0 192.0 L1265.0 285.0 L1312.0 365.0 L1337.0 400.0 L1353.0 450.0 L1429.0 585.0 L1432.0 592.0" fill="none" stroke="#484848" stroke-width="8" stroke-linejoin="round" stroke-linecap="round"/><path d="M1331.0 192.0 L1361.0 237.0 L1371.0 250.0 L1429.0 340.0 L1440.0 356.0" fill="none" stroke="#484848" stroke-width="8" stroke-linejoin="round" stroke-linecap="round"/><path d="M1230.0 211.0 L1269.0 196.0 L1277.0 204.0 L1234.0 223.0" fill="none" stroke="#484848" stroke-width="7" stroke-linejoin="round" stroke-linecap="round"/><path d="M1242.0 233.0 L1269.0 221.0" fill="none" stroke="#484848" stroke-width="7" stroke-linejoin="round" stroke-linecap="round"/><path d="M1201.0 273.0 L1213.0 278.0 L1226.0 301.0" fill="none" stroke="#484848" stroke-width="7" stroke-linejoin="round" stroke-linecap="round"/><path d="M1090.0 297.0 L1131.0 287.0" fill="none" stroke="#484848" stroke-width="7" stroke-linejoin="round" stroke-linecap="round"/><path d="M1102.0 305.0 L1106.0 309.0 L1133.0 295.0" fill="none" stroke="#484848" stroke-width="7" stroke-linejoin="round" stroke-linecap="round"/><path d="M1090.0 307.0 L1100.0 330.0 L1110.0 352.0" fill="none" stroke="#484848" stroke-width="7" stroke-linejoin="round" stroke-linecap="round"/><path d="M1275.0 389.0 L1312.0 375.0" fill="none" stroke="#484848" stroke-width="7" stroke-linejoin="round" stroke-linecap="round"/><path d="M1339.0 346.0 L1339.0 327.0 L1443.0 300.0" fill="none" stroke="#484848" stroke-width="8" stroke-linejoin="round" stroke-linecap="round"/><path d="M1314.0 360.0 L1410.0 317.0" fill="none" stroke="#484848" stroke-width="8" stroke-linejoin="round" stroke-linecap="round"/><path d="M1341.0 303.0 L1390.0 278.0 L1440.0 248.0" fill="none" stroke="#484848" stroke-width="7" stroke-linejoin="round" stroke-linecap="round"/><path d="M1409.0 221.0 L1415.0 241.0 L1423.0 254.0 L1429.0 270.0 L1440.0 270.0" fill="none" stroke="#484848" stroke-width="7" stroke-linejoin="round" stroke-linecap="round"/><path d="M1201.0 398.0 L1242.0 379.0" fill="none" stroke="#484848" stroke-width="7" stroke-linejoin="round" stroke-linecap="round"/><path d="M1129.0 435.0 L1158.0 499.0" fill="none" stroke="#484848" stroke-width="8" stroke-linejoin="round" stroke-linecap="round"/><path d="M1217.0 439.0 L1263.0 417.0 L1304.0 390.0" fill="none" stroke="#484848" stroke-width="8" stroke-linejoin="round" stroke-linecap="round"/><path d="M1213.0 402.0 L1213.0 425.0 L1250.0 413.0" fill="none" stroke="#484848" stroke-width="6" stroke-linejoin="round" stroke-linecap="round"/><path d="M1028.0 396.0 L1015.0 363.0 L1025.0 344.0 L1030.0 345.0 L1046.0 388.0" fill="none" stroke="#484848" stroke-width="5" stroke-linejoin="round" stroke-linecap="round"/><path d="M1055.0 382.0 L1044.0 335.0 L1062.0 324.0 L1066.0 327.0 L1083.0 367.0" fill="none" stroke="#484848" stroke-width="5" stroke-linejoin="round" stroke-linecap="round"/><path d="M1059.0 368.0 L1080.0 360.0" fill="none" stroke="#484848" stroke-width="5" stroke-linejoin="round" stroke-linecap="round"/><path d="M1093.0 361.0 L1077.0 304.0 L1131.0 283.0" fill="none" stroke="#484848" stroke-width="5" stroke-linejoin="round" stroke-linecap="round"/><path d="M1105.0 355.0 L1094.0 301.0 L1134.0 288.0" fill="none" stroke="#484848" stroke-width="5" stroke-linejoin="round" stroke-linecap="round"/><path d="M1107.0 308.0 L1135.0 296.0" fill="none" stroke="#484848" stroke-width="5" stroke-linejoin="round" stroke-linecap="round"/><path d="M1359.0 444.0 L1419.0 413.0 L1436.0 439.0" fill="none" stroke="#484848" stroke-width="8" stroke-linejoin="round" stroke-linecap="round"/><path d="M1275.0 542.0 L1374.0 489.0" fill="none" stroke="#484848" stroke-width="8" stroke-linejoin="round" stroke-linecap="round"/><path d="M1316.0 481.0 L1329.0 474.0 L1341.0 499.0" fill="none" stroke="#484848" stroke-width="7" stroke-linejoin="round" stroke-linecap="round"/><path d="M1291.0 513.0 L1320.0 501.0" fill="none" stroke="#484848" stroke-width="7" stroke-linejoin="round" stroke-linecap="round"/><path d="M1326.0 513.0 L1355.0 592.0" fill="none" stroke="#484848" stroke-width="8" stroke-linejoin="round" stroke-linecap="round"/><path d="M1345.0 550.0 L1394.0 522.0" fill="none" stroke="#484848" stroke-width="8" stroke-linejoin="round" stroke-linecap="round"/><path d="M1440.0 356.0 L1457.0 346.0 L1623.0 258.0 L1636.0 240.0 L1644.0 213.0" fill="none" stroke="#484848" stroke-width="10" stroke-linejoin="round" stroke-linecap="round"/><path d="M1570.0 192.0 L1621.0 254.0 L1732.0 400.0 L1745.0 415.0" fill="none" stroke="#484848" stroke-width="8" stroke-linejoin="round" stroke-linecap="round"/><path d="M1465.0 204.0 L1537.0 301.0 L1605.0 400.0 L1640.0 450.0" fill="none" stroke="#484848" stroke-width="8" stroke-linejoin="round" stroke-linecap="round"/><path d="M1434.0 206.0 L1455.0 235.0" fill="none" stroke="#484848" stroke-width="7" stroke-linejoin="round" stroke-linecap="round"/><path d="M1486.0 227.0 L1442.0 245.0 L1455.0 256.0 L1488.0 241.0" fill="none" stroke="#484848" stroke-width="7" stroke-linejoin="round" stroke-linecap="round"/><path d="M1461.0 278.0 L1500.0 260.0" fill="none" stroke="#484848" stroke-width="7" stroke-linejoin="round" stroke-linecap="round"/><path d="M1430.0 303.0 L1451.0 295.0 L1463.0 297.0 L1484.0 330.0" fill="none" stroke="#484848" stroke-width="7" stroke-linejoin="round" stroke-linecap="round"/><path d="M1520.0 365.0 L1545.0 400.0" fill="none" stroke="#484848" stroke-width="7" stroke-linejoin="round" stroke-linecap="round"/><path d="M1570.0 400.0 L1617.0 369.0 L1636.0 391.0 L1677.0 369.0 L1656.0 344.0 L1677.0 332.0" fill="none" stroke="#484848" stroke-width="7" stroke-linejoin="round" stroke-linecap="round"/><path d="M1648.0 235.0 L1636.0 268.0" fill="none" stroke="#484848" stroke-width="6" stroke-linejoin="round" stroke-linecap="round"/><path d="M1646.0 225.0 L1677.0 233.0" fill="none" stroke="#484848" stroke-width="6" stroke-linejoin="round" stroke-linecap="round"/><path d="M1646.0 282.0 L1668.0 258.0 L1710.0 311.0 L1636.0 348.0 L1617.0 326.0 L1656.0 305.0" fill="none" stroke="#484848" stroke-width="7" stroke-linejoin="round" stroke-linecap="round"/><path d="M1660.0 272.0 L1685.0 274.0" fill="none" stroke="#484848" stroke-width="6" stroke-linejoin="round" stroke-linecap="round"/><path d="M1685.0 400.0 L1718.0 381.0" fill="none" stroke="#484848" stroke-width="7" stroke-linejoin="round" stroke-linecap="round"/><path d="M1440.0 356.0 L1447.0 372.0 L1457.0 390.0 L1527.0 493.0 L1562.0 546.0 L1595.0 592.0" fill="none" stroke="#484848" stroke-width="8" stroke-linejoin="round" stroke-linecap="round"/><path d="M1430.0 555.0 L1438.0 550.0 L1627.0 434.0 L1704.0 390.0 L1725.0 378.0" fill="none" stroke="#484848" stroke-width="8" stroke-linejoin="round" stroke-linecap="round"/><path d="M1537.0 482.0 L1537.0 476.0 L1578.0 452.0 L1574.0 427.0 L1605.0 406.0" fill="none" stroke="#484848" stroke-width="7" stroke-linejoin="round" stroke-linecap="round"/><path d="M1541.0 390.0 L1553.0 406.0 L1578.0 394.0" fill="none" stroke="#484848" stroke-width="7" stroke-linejoin="round" stroke-linecap="round"/><path d="M1453.0 489.0 L1477.0 526.0" fill="none" stroke="#484848" stroke-width="7" stroke-linejoin="round" stroke-linecap="round"/><path d="M1518.0 581.0 L1506.0 559.0 L1541.0 532.0" fill="none" stroke="#484848" stroke-width="7" stroke-linejoin="round" stroke-linecap="round"/><path d="M1430.0 419.0 L1438.0 439.0" fill="none" stroke="#484848" stroke-width="7" stroke-linejoin="round" stroke-linecap="round"/><path d="M1919.0 192.0 L1905.0 212.0 L1876.0 307.0 L1849.0 415.0 L1840.0 450.0" fill="none" stroke="#484848" stroke-width="8" stroke-linejoin="round" stroke-linecap="round"/><path d="M754.0 419.0 L853.0 420.0 L890.0 427.0" fill="none" stroke="#2e2e2e" stroke-width="3" stroke-linejoin="round" stroke-linecap="round"/><path d="M1407.0 530.0 L1440.0 511.0" fill="none" stroke="#3a3a3a" stroke-width="2" stroke-linejoin="round" stroke-linecap="round"/><path d="M1770.0 217.0 L1883.0 262.0 L1973.0 307.0 L2018.0 343.0 L2040.0 375.0 L2058.0 415.0 L2063.0 425.0 L2043.0 475.0 L2035.0 500.0" fill="none" stroke="#3e3e3e" stroke-width="5" stroke-linejoin="round" stroke-linecap="round"/><path d="M1997.0 192.0 L2052.0 217.0 L2085.0 237.0 L2122.0 244.0" fill="none" stroke="#444" stroke-width="5" stroke-linejoin="round" stroke-linecap="round"/><path d="M2103.0 244.0 L2115.0 280.0 L2112.0 285.0 L2063.0 280.0 L2052.0 289.0 L2027.0 280.0 L2018.0 262.0 L1995.0 251.0 L1981.0 262.0 L1986.0 273.0 L2040.0 325.0 L2085.0 361.0 L2097.0 364.0 L2108.0 384.0 L2112.0 408.0 L2121.0 413.0" fill="none" stroke="#444" stroke-width="2" stroke-linejoin="round" stroke-linecap="round"/><path d="M2122.0 475.0 L2081.0 508.0 L2052.0 538.0 L2045.0 567.0 L2042.0 592.0" fill="none" stroke="#444" stroke-width="2" stroke-linejoin="round" stroke-linecap="round"/><path d="M2049.0 562.0 L2108.0 552.0 L2117.0 560.0 L2119.0 592.0" fill="none" stroke="#444" stroke-width="2" stroke-linejoin="round" stroke-linecap="round"/><circle cx="1438.5" cy="357" r="23" fill="#484848"/><circle cx="1438.5" cy="357" r="10.5" fill="#121212"/><path d="M1229.0 250.0 L1240.0 262.0 L1270.0 305.0 L1300.0 350.0 L1420.0 340.0 L1425.0 345.0" fill="none" stroke="none" stroke-width="0" stroke-linejoin="round" stroke-linecap="round"/><path d="M1371.0 250.0 L1428.0 337.0" fill="none" stroke="#d9a9b2" stroke-width="2.2" stroke-linejoin="round" stroke-linecap="round" stroke-dasharray="14 8"/><path d="M1421.0 366.0 L1378.0 390.0 L1296.0 433.0 L1225.0 472.0" fill="none" stroke="#d9a9b2" stroke-width="2.2" stroke-linejoin="round" stroke-linecap="round" stroke-dasharray="14 8"/><path d="M1455.0 347.0 L1623.0 258.0" fill="none" stroke="#5fb8ad" stroke-width="2.2" stroke-linejoin="round" stroke-linecap="round" stroke-dasharray="14 8"/><path d="M1448.0 373.0 L1457.0 390.0 L1527.0 493.0 L1562.0 546.0" fill="none" stroke="#5fb8ad" stroke-width="2.2" stroke-linejoin="round" stroke-linecap="round" stroke-dasharray="14 8"/><path d="M1424 349 A16 16 0 0 1 1447 343" fill="none" stroke="#5fb8ad" stroke-width="2.2"/><path d="M1429 343 A16 16 0 0 1 1454 360" fill="none" stroke="#d9a9b2" stroke-width="2.2" stroke-dasharray="14 5" stroke-dashoffset="-4"/><path d="M1422 357 A16 16 0 0 0 1440 373" fill="none" stroke="#5fb8ad" stroke-width="2.2"/><path d="M1440 373 A16 16 0 0 0 1452 367" fill="none" stroke="#d9a9b2" stroke-width="2.2"/><text x="859" y="214" transform="rotate(-5 859 214)" font-family="'Liberation Sans', sans-serif" font-size="18" font-weight="bold" fill="#c4c4c4" stroke="#000" stroke-width="5" stroke-linejoin="round" paint-order="stroke" font-style="italic">Mt Hope St</text><text x="754" y="388" transform="rotate(-10 754 388)" font-family="'Liberation Sans', sans-serif" font-size="19" font-weight="bold" fill="#c4c4c4" stroke="#000" stroke-width="5" stroke-linejoin="round" paint-order="stroke" font-style="italic">n St</text><text x="1288" y="279" transform="rotate(-27 1288 279)" font-family="'Liberation Sans', sans-serif" font-size="17" font-weight="bold" fill="#bdbdbd" stroke="#000" stroke-width="5" stroke-linejoin="round" paint-order="stroke">Bridge St</text><text x="1654" y="205" transform="rotate(11 1654 205)" font-family="'Liberation Sans', sans-serif" font-size="18" letter-spacing="1" fill="#8c8c8c">Harpeth River</text><text x="1251" y="533" transform="rotate(64 1251 533)" font-family="'Liberation Sans', sans-serif" font-size="21" font-weight="bold" fill="#d8d8d8" stroke="#000" stroke-width="5" stroke-linejoin="round" paint-order="stroke">5th Ave</text><text x="1360" y="594" transform="rotate(-27 1360 594)" font-family="'Liberation Sans', sans-serif" font-size="20" font-weight="bold" fill="#d8d8d8" stroke="#000" stroke-width="5" stroke-linejoin="round" paint-order="stroke">hurch St</text><text x="1640" y="452" transform="rotate(62 1640 452)" font-family="'Liberation Sans', sans-serif" font-size="19" font-weight="bold" fill="#d0d0d0" stroke="#000" stroke-width="5" stroke-linejoin="round" paint-order="stroke">2nd A</text><text x="1556" y="540" transform="rotate(62 1556 540)" font-family="'Liberation Sans', sans-serif" font-size="19" font-weight="bold" fill="#d0d0d0" stroke="#000" stroke-width="5" stroke-linejoin="round" paint-order="stroke">3rd A</text><text x="1452" y="197" transform="rotate(52 1452 197)" font-family="'Liberation Sans', sans-serif" font-size="17" font-weight="bold" fill="#c8c8c8" stroke="#000" stroke-width="5" stroke-linejoin="round" paint-order="stroke">N</text><circle cx="1370.5" cy="250" r="11.5" fill="#f9c4ce" stroke="#fff" stroke-width="3"/><circle cx="1567.8" cy="561.7" r="13.5" fill="#6fd8c8" stroke="#fff" stroke-width="3"/></svg>
<div class="abs" style="left:746px;top:597px;width:1384px;height:130px;background:#f9f9f9;border-bottom:1.5px solid #d6d6d6"></div>

<!-- form -->
<div class="abs" style="left:927px;top:761px;font-size:24px;font-weight:bold;color:#5a5a5a;line-height:28px">Title</div>
<div class="abs" style="left:928px;top:803px;width:497px;height:53px;background:#fff;border-radius:5px;box-shadow:inset 0 1px 2px rgba(0,0,0,.12)"></div>
<div class="abs" style="left:941px;top:814px;font-size:25px;color:#111;line-height:32px">Locations</div>
<div class="abs" style="left:1451px;top:761px;font-size:23px;letter-spacing:-0.4px;font-weight:bold;color:#5a5a5a;line-height:28px">Tile Type</div>
<div class="abs" style="left:1452px;top:803px;width:230px;height:53px;background:#fff;border-radius:5px"></div>
<div class="abs" style="left:1466px;top:811px;font-size:25px;color:#111;line-height:32px">Map</div>
<div class="abs" style="left:927px;top:882px;font-size:23px;font-weight:bold;color:#5a5a5a;line-height:28px;letter-spacing:-0.9px">Signal Keys</div>

<div class="abs" style="left:1000px;top:922px;width:822px;height:63px;background:#fff;border-radius:5px 0 0 5px"></div>
<div class="abs" style="left:1006px;top:939px;font-family:'Liberation Mono', monospace;font-size:25.5px;color:#12968e;line-height:30px">LocationData1</div>
<div class="abs" style="left:1000px;top:988px;width:822px;height:63px;background:#fff;border-radius:5px 0 0 5px"></div>
<div class="abs" style="left:1006px;top:1005px;font-family:'Liberation Mono', monospace;font-size:25.5px;color:#12968e;line-height:30px">LocationData2</div>
<div class="abs" style="left:1000px;top:1054px;width:950px;height:65px;background:#fff;border-radius:5px"></div>

<!-- swatches -->
<div class="abs" style="left:1822px;top:915px;width:67px;height:75px;border:4px solid #5b93e6;border-radius:6px"></div>
<div class="abs" style="left:1827px;top:921px;width:56px;height:63px;background:#fff;border:1px solid #ccc;border-radius:5px"></div>
<div class="abs" style="left:1833px;top:927px;width:44px;height:52px;background:#f9c4ce"></div>
<div class="abs" style="left:1827px;top:987px;width:56px;height:64px;background:#fff;border:2px solid #c4c4c4;border-radius:6px"></div>
<div class="abs" style="left:1833px;top:993px;width:44px;height:52px;background:#6fd8c8"></div>

<!-- color picker -->
<div class="abs" style="left:1671px;top:418px;width:369px;height:487px;background:#fafafa;border-radius:5px;box-shadow:0 3px 6px rgba(0,0,0,.35)"></div>
<div class="abs" style="left:1675px;top:423px;width:360px;height:59px;background:#f9c4ce"></div>
<div class="abs" style="left:1675px;top:423px;width:360px;height:59px;font-size:25.5px;color:#222;text-align:center;line-height:59px">#f9c4ce</div>
<div class="abs" style="left:1676px;top:483px;width:358px;height:360px;background:linear-gradient(to top,#000,rgba(0,0,0,0)),linear-gradient(to right,#fff,#ff0030)"></div>
<div class="abs" style="left:1679px;top:850px;width:351px;height:45px;background:linear-gradient(to right,#f00 0%,#ff0 16.67%,#0f0 33.33%,#0ff 50%,#00f 66.67%,#f0f 83.33%,#f00 100%)"></div>
<div class="abs" style="left:1741px;top:480px;width:24px;height:24px;border:6px solid #fff;border-radius:50%;background:#f9c4ce;box-shadow:0 1px 3px rgba(0,0,0,.3)"></div>
<div class="abs" style="left:2011px;top:844px;width:10px;height:57px;border:2px solid #fafafa;box-shadow:0 0 1px rgba(0,0,0,.3)"></div>
<svg class="abs" style="left:1840px;top:904px" width="31" height="14"><path d="M0 0 L30 0 L15.5 13 Z" fill="#fafafa"/></svg>

<!-- toolbar icons -->
<svg class="abs" style="left:790px;top:648px" width="30" height="32" viewBox="0 0 30 32"><path d="M15 7 L6 16 L15 25 M6.5 16 L24 16" fill="none" stroke="#8c8c8c" stroke-width="4.6" stroke-linecap="round" stroke-linejoin="round"/></svg>
<svg class="abs" style="left:2056px;top:648px" width="30" height="32" viewBox="0 0 30 32"><path d="M15 7 L24 16 L15 25 M23.5 16 L6 16" fill="none" stroke="#2e2e2e" stroke-width="4.6" stroke-linecap="round" stroke-linejoin="round"/></svg>
<svg class="abs" style="left:1362px;top:650px" width="26" height="27" viewBox="0 0 26 27"><g fill="none" stroke="#333" stroke-width="2.2"><path d="M3 7 L23 7"/><path d="M9.5 6.5 L9.5 4.5 Q9.5 3 11 3 L15 3 Q16.5 3 16.5 4.5 L16.5 6.5"/><path d="M5.3 8 L6 21 Q6 23 8 23 L18 23 Q20 23 20 21 L20.7 8"/><path d="M9.3 10.5 V19 M12.8 10.5 V19 M16.6 10.5 V19"/></g></svg>
<svg class="abs" style="left:1424px;top:649px" width="28" height="28" viewBox="0 0 28 28"><g fill="#333"><path d="M16 3 L25.5 3 L25.5 12.5 Z"/><path d="M2.5 15.5 L2.5 25 L12 25 Z"/></g><path d="M22 6.5 L15.8 12.7 M12.2 16.3 L6 22.5" stroke="#333" stroke-width="3.8"/></svg>
<svg class="abs" style="left:1490px;top:653px" width="22" height="22" viewBox="0 0 22 22"><path d="M5.3 5.3 L16.3 16.3 M16.3 5.3 L5.3 16.3" stroke="#2e2e2e" stroke-width="4.8" stroke-linecap="round"/></svg>
<!-- form icons -->
<svg class="abs" style="left:952px;top:942px" width="23" height="23" viewBox="0 0 23 23"><path d="M5.5 5.5 L17.5 17.5 M17.5 5.5 L5.5 17.5" stroke="#3a7fd4" stroke-width="5" stroke-linecap="round"/></svg>
<svg class="abs" style="left:952px;top:1008px" width="23" height="23" viewBox="0 0 23 23"><path d="M5.5 5.5 L17.5 17.5 M17.5 5.5 L5.5 17.5" stroke="#3a7fd4" stroke-width="5" stroke-linecap="round"/></svg>
<svg class="abs" style="left:951px;top:1070px" width="25" height="25" viewBox="0 0 25 25"><path d="M12.3 4 L12.3 21 M3.8 12.5 L20.8 12.5" stroke="#2e2e2e" stroke-width="5" stroke-linecap="round"/></svg>
<svg class="abs" style="left:1904.3px;top:939.3px" width="28" height="28" viewBox="0 0 28 28"><path fill-rule="evenodd" fill="#5e5e5e" d="M10.65,6.08 L11.70,5.71 L11.70,3.35 L16.30,3.35 L16.30,5.71 L17.35,6.08 L17.23,6.03 L18.23,6.51 L19.91,4.84 L23.16,8.09 L21.49,9.77 L21.97,10.77 L21.92,10.65 L22.29,11.70 L24.65,11.70 L24.65,16.30 L22.29,16.30 L21.92,17.35 L21.97,17.23 L21.49,18.23 L23.16,19.91 L19.91,23.16 L18.23,21.49 L17.23,21.97 L17.35,21.92 L16.30,22.29 L16.30,24.65 L11.70,24.65 L11.70,22.29 L10.65,21.92 L10.77,21.97 L9.77,21.49 L8.09,23.16 L4.84,19.91 L6.51,18.23 L6.03,17.23 L6.08,17.35 L5.71,16.30 L3.35,16.30 L3.35,11.70 L5.71,11.70 L6.08,10.65 L6.03,10.77 L6.51,9.77 L4.84,8.09 L8.09,4.84 L9.77,6.51 L10.77,6.03 Z M14 10.5 A3.5 3.5 0 1 0 14 17.5 A3.5 3.5 0 1 0 14 10.5 Z"/></svg>
<svg class="abs" style="left:1910.8px;top:972.1px" width="15" height="8"><path d="M0 0 L15 0 L7.5 7.5 Z" fill="#5e5e5e"/></svg>
<svg class="abs" style="left:1904.3px;top:1005.0px" width="28" height="28" viewBox="0 0 28 28"><path fill-rule="evenodd" fill="#5e5e5e" d="M10.65,6.08 L11.70,5.71 L11.70,3.35 L16.30,3.35 L16.30,5.71 L17.35,6.08 L17.23,6.03 L18.23,6.51 L19.91,4.84 L23.16,8.09 L21.49,9.77 L21.97,10.77 L21.92,10.65 L22.29,11.70 L24.65,11.70 L24.65,16.30 L22.29,16.30 L21.92,17.35 L21.97,17.23 L21.49,18.23 L23.16,19.91 L19.91,23.16 L18.23,21.49 L17.23,21.97 L17.35,21.92 L16.30,22.29 L16.30,24.65 L11.70,24.65 L11.70,22.29 L10.65,21.92 L10.77,21.97 L9.77,21.49 L8.09,23.16 L4.84,19.91 L6.51,18.23 L6.03,17.23 L6.08,17.35 L5.71,16.30 L3.35,16.30 L3.35,11.70 L5.71,11.70 L6.08,10.65 L6.03,10.77 L6.51,9.77 L4.84,8.09 L8.09,4.84 L9.77,6.51 L10.77,6.03 Z M14 10.5 A3.5 3.5 0 1 0 14 17.5 A3.5 3.5 0 1 0 14 10.5 Z"/></svg>
<svg class="abs" style="left:1910.8px;top:1038.3px" width="15" height="8"><path d="M0 0 L15 0 L7.5 7.5 Z" fill="#5e5e5e"/></svg>
</body></html>
